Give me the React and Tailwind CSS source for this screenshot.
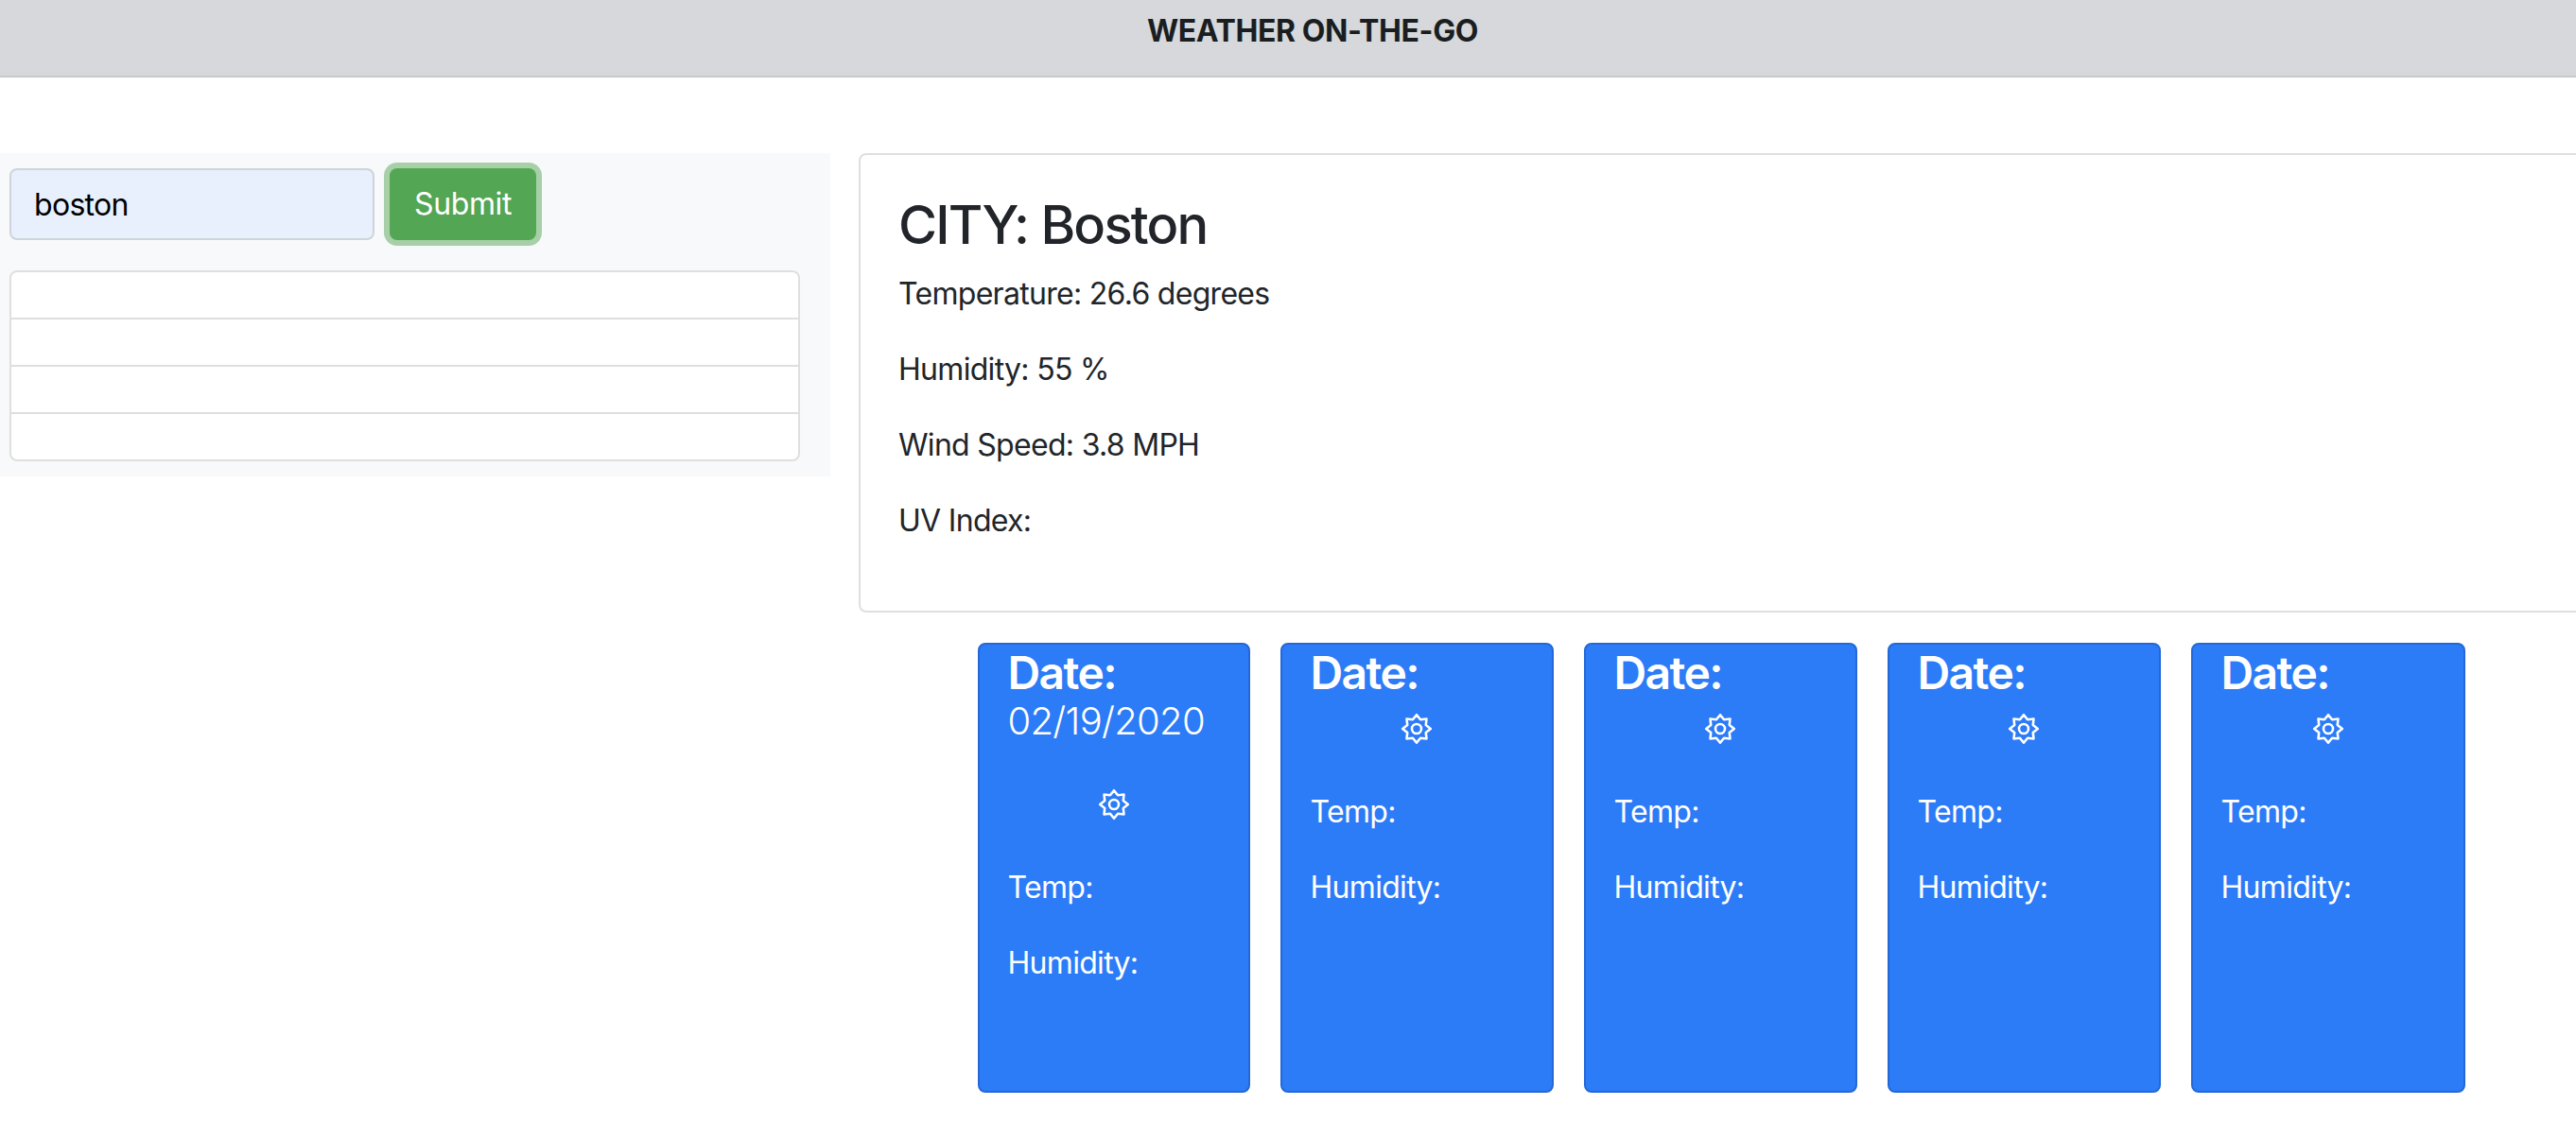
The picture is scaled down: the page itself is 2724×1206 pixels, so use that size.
import React from 'react';

const FONT = 'font-["Inter","Noto_Sans",sans-serif]';

// eight pointed cog outline used on the forecast cards
const cogPoints = Array.from({ length: 16 }, (_, i) => {
  const r = i % 2 === 0 ? 14.8 : 10.6;
  const a = (i * Math.PI) / 8 - Math.PI / 2;
  return `${(17 + r * Math.cos(a)).toFixed(2)},${(17 + r * Math.sin(a)).toFixed(2)}`;
}).join(' ');

const CogIcon = () => (
  <svg width="34" height="34" viewBox="0 0 34 34" fill="none" stroke="white" strokeWidth="2.6" strokeLinejoin="round">
    <polygon points={cogPoints} />
    <circle cx="17" cy="17" r="5" />
  </svg>
);

const ForecastCard = ({ date, width }) => (
  <div className={`${width} h-[476px] shrink-0 rounded-lg border-2 border-[#2468d8] bg-[#2c7bf7] px-[30px] text-white`}>
    <h4 className="pt-[1px] text-[48px] leading-[58px] font-semibold tracking-[-1.6px]">Date:</h4>
    {date && <div className="-mt-[2px] mb-[47px] text-[40px] leading-[48px] font-light tracking-[-0.7px] whitespace-nowrap">{date}</div>}
    <div className="mt-[13px] flex justify-center">
      <CogIcon />
    </div>
    <p className="mt-[47px] text-[32px] leading-[48px] tracking-[-0.7px]">Temp:</p>
    <p className="mt-[32px] text-[32px] leading-[48px] tracking-[-0.7px]">Humidity:</p>
  </div>
);

export default function App() {
  return (
    <div className={`${FONT} h-[1206px] overflow-hidden bg-white text-[#212529]`}>
      <header className="h-[82px] border-b-2 border-[#c8c9cb] bg-[#d6d8db] pl-[52px] text-center">
        <h1 className="pt-[14px] text-[32px] leading-[38px] font-bold tracking-[-0.4px] text-[#1b1e21]">WEATHER ON-THE-GO</h1>
      </header>

      <div className="mt-[80px] flex gap-[30px]">
        <aside className="h-[342px] w-[878px] shrink-0 bg-[#f8f9fa] px-[10px] pt-[16px]">
          <form className="flex gap-4">
            <input
              type="text"
              defaultValue="boston"
              className="h-[76px] w-[386px] rounded-lg border-2 border-[#ced4da] bg-[#e8f0fe] px-6 text-[32px] tracking-[-0.7px] text-black outline-none"
            />
            <button
              type="button"
              className="h-[76px] w-[155px] rounded-lg bg-[#53a653] text-[32px] tracking-[-0.4px] text-white ring-[6px] ring-[#a7cfa8]"
            >
              Submit
            </button>
          </form>
          <ul className="mt-[32px] w-[836px] divide-y-2 divide-[#dfdfdf] overflow-hidden rounded-lg border-2 border-[#dfdfdf] bg-white">
            <li className="h-[50px]"></li>
            <li className="h-[50px]"></li>
            <li className="h-[50px]"></li>
            <li className="h-[48px]"></li>
          </ul>
        </aside>

        <main className="w-[1824px] shrink-0">
          <section className="h-[486px] rounded-lg border-2 border-[#dfdfdf] px-10 pt-[41px]">
            <h3 className="text-[56px] leading-[67px] font-medium tracking-[-1.8px]">CITY: Boston</h3>
            <p className="mt-[15px] text-[32px] leading-[48px] tracking-[-0.7px]">Temperature: 26.6 degrees</p>
            <p className="mt-8 text-[32px] leading-[48px] tracking-[-0.7px]">Humidity: 55 %</p>
            <p className="mt-8 text-[32px] leading-[48px] tracking-[-0.7px]">Wind Speed: 3.8 MPH</p>
            <p className="mt-8 text-[32px] leading-[48px] tracking-[-0.7px]">UV Index:</p>
          </section>
          <div className="mt-[32px] flex justify-center gap-[32px]">
            <ForecastCard date="02/19/2020" width="w-[288px]" />
            <ForecastCard width="w-[289px]" />
            <ForecastCard width="w-[289px]" />
            <ForecastCard width="w-[289px]" />
            <ForecastCard width="w-[290px]" />
          </div>
        </main>
      </div>
    </div>
  );
}
